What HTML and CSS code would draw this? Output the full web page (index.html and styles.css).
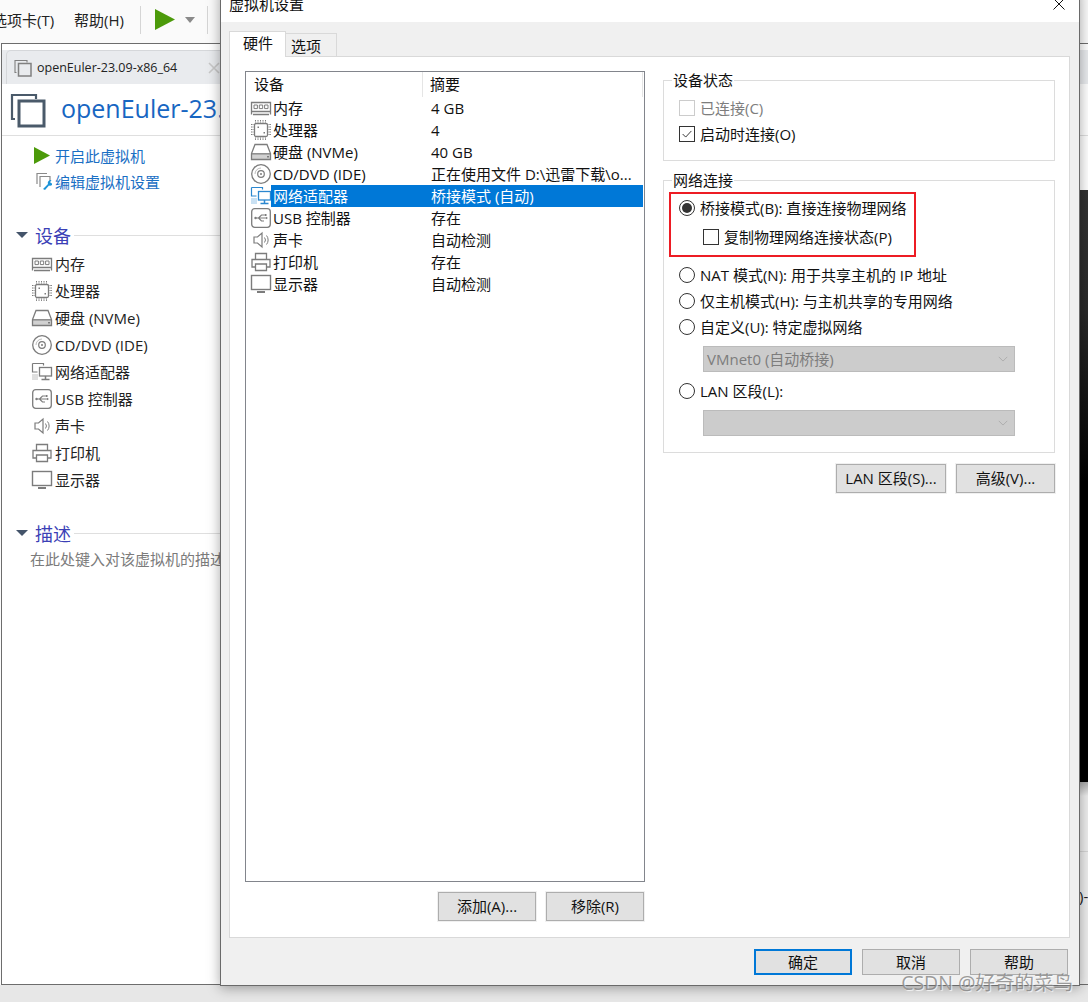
FILE: index.html
```html
<!DOCTYPE html>
<html lang="zh-CN">
<head>
<meta charset="utf-8">
<title>虚拟机设置</title>
<link rel="stylesheet" href="styles.css">
</head>
<body>
<svg class="defs" width="0" height="0" aria-hidden="true">
  <symbol id="i-mem" viewBox="0 0 22 22"><path d="M1.500 5.500h19v9h-19zM3 17.500h16M1.500 14.500v3M20.500 14.500v3" fill="none" stroke="currentColor" stroke-width="1.300"/><path d="M4 8h3.400v3.600H4zM9.300 8h3.400v3.600H9.300zM14.600 8H18v3.600h-3.400z" fill="none" stroke="currentColor"/></symbol>
  <symbol id="i-cpu" viewBox="0 0 22 22"><rect x="4.500" y="4.500" width="13" height="13" rx="1.500" fill="none" stroke="currentColor" stroke-width="1.300"/><path d="M5.500 1v2.500M8 1v2.500M10.500 1v2.500M13 1v2.500M15.500 1v2.500M5.500 18.500V21M8 18.500V21M10.500 18.500V21M13 18.500V21M15.500 18.500V21M1 5.500h2.500M1 8h2.500M1 10.500h2.500M1 13h2.500M1 15.500h2.500M18.500 5.500H21M18.500 8H21M18.500 10.500H21M18.500 13H21M18.500 15.500H21" fill="none" stroke="currentColor" stroke-dasharray="1.200 .4"/><path d="M7.500 7.500h1.500V9H7.500zM13.500 13h1.500v1.500h-1.500z" fill="currentColor"/></symbol>
  <symbol id="i-disk" viewBox="0 0 22 22"><path d="M5 3.500h12l3.500 9v6h-19v-6z" fill="none" stroke="currentColor" stroke-width="1.300"/><path d="M1.500 12.800h19" fill="none" stroke="currentColor" stroke-width="1.300"/><path d="M1.500 13h19v5.500h-19z" fill="currentColor" opacity=".35"/><path d="M17 15h2v1.500h-2z" fill="currentColor"/></symbol>
  <symbol id="i-cd" viewBox="0 0 22 22"><circle cx="11" cy="11" r="9.300" fill="none" stroke="currentColor" stroke-width="1.300"/><circle cx="11" cy="11" r="3.300" fill="none" stroke="currentColor" stroke-width="1.200"/><circle cx="11" cy="11" r="1" fill="currentColor"/><path d="M5 11a6 6 0 0 1 6-6" fill="none" stroke="currentColor" opacity=".5"/></symbol>
  <symbol id="i-net" viewBox="0 0 22 22"><path d="M1.500 2.500h11v2M1.500 2.500v8.500h5" fill="none" stroke="currentColor" stroke-width="1.200"/><path d="M1.500 14h6M1.500 18h6M1.500 16h6" fill="none" stroke="currentColor" stroke-dasharray="1 1"/><rect x="8.500" y="6.500" width="12" height="8.500" fill="none" stroke="currentColor" stroke-width="1.300"/><path d="M14.500 15v3M10.500 18.500h8" fill="none" stroke="currentColor" stroke-width="1.500"/></symbol>
  <symbol id="i-usb" viewBox="0 0 22 22"><rect x="1.700" y="1.700" width="18.600" height="18.600" rx="3" fill="none" stroke="currentColor" stroke-width="1.300"/><path d="M5.500 11h11M8.500 11l3-3h2.500M8.500 11l3 3h2.500" fill="none" stroke="currentColor" stroke-width="1.100"/><circle cx="5.500" cy="11" r="1.200" fill="currentColor"/><path d="M14.500 7h2v2h-2zM16 9.800l2 1.200-2 1.200z" fill="currentColor"/></symbol>
  <symbol id="i-snd" viewBox="0 0 22 22"><path d="M4 8h3.500L12 4v14l-4.500-4H4z" fill="none" stroke="currentColor" stroke-width="1.200"/><path d="M14.500 8.500a4 4 0 0 1 0 5M16.500 6.500a7 7 0 0 1 0 9" fill="none" stroke="currentColor"/></symbol>
  <symbol id="i-prn" viewBox="0 0 22 22"><path d="M5.500 8V2.500h11V8M5.500 16H2V8.500h18V16h-3.500" fill="none" stroke="currentColor" stroke-width="1.300"/><path d="M5.500 13h11v6.500h-11z" fill="none" stroke="currentColor" stroke-width="1.300"/></symbol>
  <symbol id="i-mon" viewBox="0 0 22 22"><rect x="1.500" y="2.500" width="19" height="14" fill="none" stroke="currentColor" stroke-width="1.400"/><path d="M7 19h8" fill="none" stroke="currentColor" stroke-width="2"/></symbol>
  <symbol id="i-vm" viewBox="0 0 36 36"><path d="M5 27H2V3h24v4" fill="none" stroke="currentColor" stroke-width="2.200"/><rect x="9" y="9" width="25" height="25" fill="none" stroke="currentColor" stroke-width="3"/></symbol>
</svg>

<div class="app">
  <header class="toolbar">
    <span class="menu menu-cut">选项卡(T)</span>
    <span class="menu menu-help">帮助(H)</span>
    <span class="tool-sep"></span>
    <svg class="tool-play" viewBox="0 0 20 21"><path d="M0 0l20 10.500L0 21z"/></svg>
    <svg class="tool-caret" viewBox="0 0 10 6"><path d="M0 0h10L5 6z"/></svg>
    <span class="tool-sep tool-sep-last"></span>
  </header>

  <main class="vm">
    <div class="tabstrip">
      <div class="vm-tab">
        <svg class="tab-icon"><use href="#i-vm"/></svg>
        <span class="vm-tab-name">openEuler-23.09-x86_64</span>
        <svg class="tab-close" viewBox="0 0 12 12"><path d="M1 1l10 10M11 1L1 11"/></svg>
      </div>
    </div>
    <div class="vm-head">
      <svg class="vm-logo"><use href="#i-vm"/></svg>
      <h1 class="vm-title">openEuler-23.09-x86_64</h1>
    </div>
    <div class="vm-body">
      <aside class="side">
        <a class="action">
          <svg class="action-play" viewBox="0 0 16 17"><path d="M0 0l16 8.500L0 17z"/></svg>
          <span>开启此虚拟机</span>
        </a>
        <a class="action">
          <svg class="action-edit" viewBox="0 0 18 18"><path class="edit-back" d="M3 12V1.500h10M6 15V4.500h10v5"/><path class="edit-key" d="M9 17l5-5a3 3 0 0 1 3.500-4l-1.500 2 1.500 1.500 1.500-1.500a3 3 0 0 1-4 3.500l-4 4.500z"/></svg>
          <span>编辑虚拟机设置</span>
        </a>

        <div class="section section-dev"><i class="caret"></i><h2>设备</h2><b class="rule"></b></div>
        <ul class="devs">
          <li><svg><use href="#i-mem"/></svg>内存</li>
          <li><svg><use href="#i-cpu"/></svg>处理器</li>
          <li><svg><use href="#i-disk"/></svg>硬盘 (NVMe)</li>
          <li><svg><use href="#i-cd"/></svg>CD/DVD (IDE)</li>
          <li><svg><use href="#i-net"/></svg>网络适配器</li>
          <li><svg><use href="#i-usb"/></svg>USB 控制器</li>
          <li><svg><use href="#i-snd"/></svg>声卡</li>
          <li><svg><use href="#i-prn"/></svg>打印机</li>
          <li><svg><use href="#i-mon"/></svg>显示器</li>
        </ul>

        <div class="section section-desc"><i class="caret"></i><h2>描述</h2><b class="rule"></b></div>
        <p class="desc">在此处键入对该虚拟机的描述。</p>
      </aside>
      <section class="preview">
        <div class="screen"></div>
        <div class="meta">
          <div class="meta-rule"></div>
          <span class="meta-line">虚拟机详细信息)-</span>
        </div>
      </section>
    </div>
  </main>
</div>

<div class="dialog">
  <div class="dlg-title">
    <span>虚拟机设置</span>
    <svg class="dlg-close" viewBox="0 0 12 12"><path d="M.5.500l11 11M11.500.500l-11 11"/></svg>
  </div>
  <div class="tabs">
    <span class="tab tab-on">硬件</span>
    <span class="tab">选项</span>
  </div>
  <div class="panel">
    <div class="col-left">
      <div class="list">
        <div class="list-head">
          <span class="lh-name">设备</span>
          <span class="lh-sum">摘要</span>
        </div>
        <div class="row"><svg><use href="#i-mem"/></svg><span class="name">内存</span><span class="sum">4 GB</span></div>
        <div class="row"><svg><use href="#i-cpu"/></svg><span class="name">处理器</span><span class="sum">4</span></div>
        <div class="row"><svg><use href="#i-disk"/></svg><span class="name">硬盘 (NVMe)</span><span class="sum">40 GB</span></div>
        <div class="row"><svg><use href="#i-cd"/></svg><span class="name">CD/DVD (IDE)</span><span class="sum">正在使用文件 D:\迅雷下载\o...</span></div>
        <div class="row row-sel"><svg><use href="#i-net"/></svg><span class="name">网络适配器</span><span class="sum">桥接模式 (自动)</span></div>
        <div class="row"><svg><use href="#i-usb"/></svg><span class="name">USB 控制器</span><span class="sum">存在</span></div>
        <div class="row"><svg><use href="#i-snd"/></svg><span class="name">声卡</span><span class="sum">自动检测</span></div>
        <div class="row"><svg><use href="#i-prn"/></svg><span class="name">打印机</span><span class="sum">存在</span></div>
        <div class="row"><svg><use href="#i-mon"/></svg><span class="name">显示器</span><span class="sum">自动检测</span></div>
      </div>
      <div class="btn-row btn-row-list">
        <button class="btn btn-wide">添加(A)...</button>
        <button class="btn btn-wide">移除(R)</button>
      </div>
    </div>

    <div class="col-right">
      <div class="group group-state">
        <div class="legend">设备状态</div>
        <label class="opt opt-off"><i class="box box-off"></i>已连接(C)</label>
        <label class="opt"><i class="box"><svg viewBox="0 0 16 16"><path d="M3 8l3.500 3.500L13 4.500"/></svg></i>启动时连接(O)</label>
      </div>

      <div class="group group-net">
        <div class="legend">网络连接</div>
        <div class="redbox">
          <label class="opt opt-a"><i class="radio radio-on"></i>桥接模式(B): 直接连接物理网络</label>
          <label class="opt opt-b"><i class="box"></i>复制物理网络连接状态(P)</label>
        </div>
        <label class="opt opt-r opt-first"><i class="radio"></i>NAT 模式(N): 用于共享主机的 IP 地址</label>
        <label class="opt opt-r"><i class="radio"></i>仅主机模式(H): 与主机共享的专用网络</label>
        <label class="opt opt-r"><i class="radio"></i>自定义(U): 特定虚拟网络</label>
        <div class="select"><span class="select-text">VMnet0 (自动桥接)</span><svg viewBox="0 0 12 7"><path d="M1 1l5 5 5-5"/></svg></div>
        <label class="opt opt-r opt-lan"><i class="radio"></i>LAN 区段(L):</label>
        <div class="select"><span></span><svg viewBox="0 0 12 7"><path d="M1 1l5 5 5-5"/></svg></div>
      </div>

      <div class="btn-row btn-row-net">
        <button class="btn btn-lan">LAN 区段(S)...</button>
        <button class="btn btn-adv">高级(V)...</button>
      </div>
    </div>
  </div>
  <div class="dlg-foot">
    <button class="btn btn-foot btn-ok">确定</button>
    <button class="btn btn-foot">取消</button>
    <button class="btn btn-foot">帮助</button>
  </div>
</div>

<div class="watermark">CSDN @好奇的菜鸟</div>
</body>
</html>
```

FILE: styles.css
```css
* { box-sizing: border-box; }
html, body { margin: 0; padding: 0; }
body {
  width: 1088px;
  height: 1002px;
  overflow: hidden;
  position: relative;
  background: #e7e7e7;
  font-family: "Open Sans", "Noto Sans CJK SC", sans-serif;
  font-size: 15px;
  color: #111;
}
.defs { position: absolute; }
i { font-style: normal; display: block; flex: none; }

/* background application */
.app { width: 1088px; height: 985px; display: flex; flex-direction: column; background: #fbfbfb; }
.toolbar { height: 43px; flex: none; display: flex; align-items: center; padding-bottom: 4px; background: #fafafa; }
.menu { line-height: 38px; color: #222; }
.menu-cut { margin-left: -8px; width: 82px; flex: none; white-space: nowrap; }
.menu-help { width: 52px; flex: none; white-space: nowrap; }
.tool-sep { width: 1px; height: 28px; background: #d5d5d5; margin-left: 14px; }
.tool-play { width: 20px; height: 21px; margin-left: 14px; fill: #4c9a0a; }
.tool-caret { width: 10px; height: 6px; margin-left: 10px; fill: #8a8a8a; }
.tool-sep-last { margin-left: 12px; }

.vm { flex: 1; margin-left: 1px; border: 1px solid #6d6d6d; border-right: 0; background: #fff; display: flex; flex-direction: column; min-height: 0; }
.tabstrip { margin-top: 6px; height: 34px; flex: none; background: #e9ebee; padding-left: 4px; }
.vm-tab { height: 34px; width: 240px; border: 1px solid #d5d7da; border-bottom: 0; border-radius: 5px 0 0 0; display: flex; align-items: center; font-size: 12.500px; padding-left: 7px; color: #222; }
.tab-icon { width: 18px; height: 18px; color: #808080; margin-right: 5px; flex: none; }
.vm-tab-name { width: 171px; flex: none; white-space: nowrap; }
.tab-close { width: 12px; height: 12px; flex: none; fill: none; stroke: #c8c8c8; stroke-width: 1.600; }
.vm-head { height: 52px; flex: none; display: flex; align-items: center; padding-left: 8px; border-bottom: 1px solid #dfdfdf; }
.vm-logo { width: 36px; height: 36px; color: #4a5a6a; flex: none; margin-right: 15px; }
.vm-title { margin: -4px 0 0; font-size: 25px; font-weight: 400; color: #1766c2; white-space: nowrap; }
.vm-body { flex: 1; display: flex; min-height: 0; }
.side { flex: 1; min-width: 0; padding-top: 6px; overflow: hidden; }
.action { display: flex; align-items: center; height: 26px; padding-left: 32px; color: #1a6fc4; }
.action span { margin-left: 5px; }
.action-play { width: 16px; height: 17px; fill: #4c9a0a; }
.action-edit { width: 18px; height: 18px; margin-right: -2px; }
.edit-back { fill: none; stroke: #8a8a8a; stroke-width: 1.200; }
.edit-key { fill: #1c93d8; }
.section { display: flex; align-items: center; height: 24px; padding-left: 14px; }
.section-dev { margin-top: 29px; }
.section-desc { margin-top: 28px; }
.caret { width: 0; height: 0; border-left: 6px solid transparent; border-right: 6px solid transparent; border-top: 6px solid #44546a; }
.section h2 { margin: 0 3px 0 7px; font-size: 18px; font-weight: 400; color: #3b3fb6; }
.rule { flex: 1; height: 1px; background: #dfdfdf; }
.devs { list-style: none; margin: 3px 0 0; padding: 0 0 0 29px; }
.devs li { height: 27px; display: flex; align-items: center; color: #222; white-space: nowrap; }
.devs svg { width: 22px; height: 22px; color: #7c7c7c; margin-right: 2px; flex: none; }
.desc { margin: 3px 0 0 28px; font-size: 15px; line-height: 22px; color: #7b7b7b; white-space: nowrap; }
.preview { width: 500px; flex: none; padding-top: 54px; display: flex; flex-direction: column; }
.screen { height: 592px; flex: none; background: linear-gradient(#333 0, #2a2a2a 20%, #000 50%, #000 100%); }
.meta { flex: 1; background: linear-gradient(#aaa 0, #eee 14px); padding-top: 69px; }
.meta-rule { height: 1px; background: #d6d6d6; }
.meta-line { display: block; margin: 33px 0 0 386px; color: #222; white-space: nowrap; line-height: 22px; }

/* dialog window */
.dialog {
  position: absolute;
  left: 220px;
  top: -12px;
  width: 860px;
  height: 998px;
  display: flex;
  flex-direction: column;
  background: #f0f0f0;
  border: 1px solid #6a6a6a;
  box-shadow: 0 2px 12px rgba(0, 0, 0, .35);
}
.dlg-title { height: 33px; flex: none; background: #fff; display: flex; justify-content: space-between; align-items: flex-start; padding: 0 14px 0 8px; line-height: 30px; color: #111; }
.dlg-close { width: 12px; height: 12px; margin-top: 9px; fill: none; stroke: #111; stroke-width: 1; }
.tabs { display: flex; align-items: flex-end; height: 25px; margin: 9px 0 0 8px; flex: none; position: relative; z-index: 1; }
.tab { height: 23px; width: 51px; padding-left: 5px; line-height: 24px; background: #f0f0f0; border: 1px solid #d9d9d9; border-left: 0; border-bottom: 0; }
.tab-on { height: 26px; width: 57px; padding-left: 13px; margin-bottom: -1px; background: #fff; border-left: 1px solid #d9d9d9; line-height: 23px; }
.panel { height: 882px; flex: none; margin: 0 9px 0 8px; background: #fff; border: 1px solid #d9d9d9; display: flex; padding: 14px 13px 0 15px; }
.col-left { width: 400px; flex: none; }
.list { width: 400px; height: 811px; border: 1px solid #82858c; background: #fff; }
.list-head { height: 25px; display: flex; line-height: 25px; }
.lh-name { width: 177px; padding-left: 8px; border-right: 1px solid #e5e5e5; }
.lh-sum { flex: 1; padding-left: 7px; border-right: 1px solid #e5e5e5; margin-right: 1px; }
.row { height: 22px; display: flex; align-items: center; line-height: 23px; margin-right: 1px; white-space: nowrap; }
.row svg { width: 22px; height: 22px; margin: 0 -1px 0 4px; color: #7c7c7c; flex: none; }
.name { width: 152px; padding-left: 2px; flex: none; align-self: stretch; }
.sum { flex: 1; padding-left: 8px; align-self: stretch; color: #111; overflow: hidden; }
.row-sel svg { color: #2b87cf; }
.row-sel .name, .row-sel .sum { background: #0078d7; color: #fff; }
.btn-row { display: flex; gap: 10px; justify-content: flex-end; }
.btn-row-list { margin: 10px 1px 0 0; }
.btn { font: inherit; line-height: 20px; color: #111; background: #e1e1e1; border: 1px solid #adadad; padding: 0; outline: 1px solid #f0f0f0; white-space: nowrap; }
.btn-wide { width: 98px; height: 29px; padding-bottom: 2px; }
.col-right { width: 392px; margin-left: 18px; flex: none; }
.group { border: 1px solid #dcdcdc; background: #fff; }
.legend { width: fit-content; height: 18px; line-height: 16px; margin: -9px 0 0 8px; padding: 0 1px; background: #fff; }
.group-state { margin-top: 9px; height: 81px; padding-bottom: 13px; }
.group-state .legend { margin-bottom: 5px; }
.opt { display: flex; align-items: center; height: 26px; padding-left: 15px; white-space: nowrap; line-height: 24px; }
.opt .box, .opt .radio { margin-right: 5px; }
.opt-off { color: #7d7d7d; }
.box { width: 16px; height: 16px; border: 1px solid #333; background: #fff; }
.box svg { display: block; width: 14px; height: 14px; fill: none; stroke: #333; stroke-width: 1.100; }
.box-off { border-color: #ccc; }
.radio { width: 16px; height: 16px; border-radius: 50%; border: 1px solid #333; background: #fff; display: flex; align-items: center; justify-content: center; }
.radio-on::after { content: ""; width: 10px; height: 10px; border-radius: 50%; background: #333; }
.group-net { margin-top: 19px; height: 273px; }
.redbox { width: 247px; height: 65px; margin: 2px 0 0 5px; border: 2px solid #ed1c24; }
.redbox .opt { padding-left: 8px; }
.redbox .opt-a { height: 28px; }
.redbox .opt-b { height: 30px; padding-left: 32px; }
.opt-first { margin-top: 5px; }
.select { width: 312px; height: 26px; margin: 6px 0 0 39px; background: #ccc; border: 1px solid #bbb; display: flex; align-items: center; justify-content: space-between; padding: 0 6px 0 3px; color: #7d7d7d; }
.select-text { margin-top: -2px; }
.select svg { width: 10px; height: 6px; fill: none; stroke: #a8a8a8; stroke-width: 1; }
.opt-lan { margin-top: 6px; }
.btn-row-net { margin-top: 11px; }
.btn-lan { width: 110px; height: 29px; padding-bottom: 2px; }
.btn-adv { width: 99px; height: 29px; padding-bottom: 2px; }
.dlg-foot { display: flex; justify-content: flex-end; gap: 10px; margin: 11px 11px 0 0; }
.btn-foot { width: 98px; height: 26px; }
.btn-ok { border: 2px solid #0078d7; }

/* image watermark */
.watermark {
  position: absolute;
  right: 15px;
  bottom: 6px;
  font-size: 19.500px;
  line-height: 26px;
  color: rgba(125, 125, 125, .75);
  text-shadow: 1px 1px 1px rgba(255, 255, 255, .8);
  white-space: nowrap;
}
```
